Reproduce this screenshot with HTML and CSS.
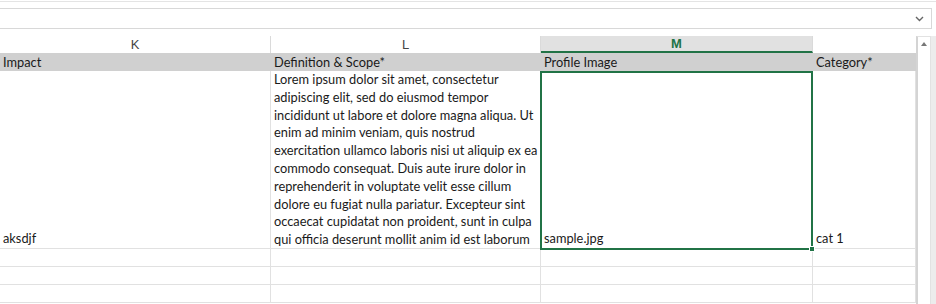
FILE: index.html
```html
<!DOCTYPE html>
<html>
<head lang="en">
    <meta charset="UTF-8">
    <title>Sheet</title>
    <link rel="stylesheet" href="styles.css">
</head>
<body>
<div id="top"></div>
<div id="formula">
    <span class="chev">
        <svg width="9" height="6" viewBox="0 0 9 6"><path d="M1 1 L4.5 4.5 L8 1" fill="none" stroke="#666" stroke-width="1.4"/></svg>
    </span>
</div>
<div id="sheet">
    <div id="grid">
        <div class="colhead">K</div>
        <div class="colhead">L</div>
        <div class="colhead sel">M</div>
        <div class="colhead blank"></div>

        <div class="cell head">Impact</div>
        <div class="cell head">Definition &amp; Scope*</div>
        <div class="cell head">Profile Image</div>
        <div class="cell head">Category*</div>

        <div class="cell tall">aksdjf</div>
        <div class="cell tall wrap">Lorem ipsum dolor sit amet, consectetur<br>adipiscing elit, sed do eiusmod tempor<br>incididunt ut labore et dolore magna aliqua. Ut<br>enim ad minim veniam, quis nostrud<br>exercitation ullamco laboris nisi ut aliquip ex ea<br>commodo consequat. Duis aute irure dolor in<br>reprehenderit in voluptate velit esse cillum<br>dolore eu fugiat nulla pariatur. Excepteur sint<br>occaecat cupidatat non proident, sunt in culpa<br>qui officia deserunt mollit anim id est laborum</div>
        <div class="cell tall active">sample.jpg<span class="handle"></span></div>
        <div class="cell tall">cat 1</div>

        <div class="cell"></div><div class="cell"></div><div class="cell"></div><div class="cell"></div>
        <div class="cell"></div><div class="cell"></div><div class="cell"></div><div class="cell"></div>
        <div class="cell"></div><div class="cell"></div><div class="cell"></div><div class="cell"></div>
    </div>
    <div id="vscroll">
        <div class="up"></div>
    </div>
    <div id="edge"></div>
</div>
</body>
</html>
```

FILE: styles.css
```css
*{
    margin: 0;
    padding: 0;
    box-sizing: border-box;
}
body{
    width: 936px;
    height: 304px;
    overflow: hidden;
    background: #fff;
    font-family: "Lato", "Liberation Sans", sans-serif;
    color: #1a1a1a;
}
#top{
    height: 7px;
    border-top: 1px solid #e4e4e4;
    margin-top: 1px;
}
#formula{
    width: 932px;
    height: 21px;
    border: 1px solid #d8d8d8;
    border-left: none;
    display: flex;
    align-items: center;
    justify-content: flex-end;
    padding-right: 7px;
}
.chev{
    display: flex;
}
#sheet{
    margin-top: 7px;
    display: flex;
    height: 269px;
}
#grid{
    width: 916px;
    display: grid;
    grid-template-columns: 271px 270px 272px 103px;
    grid-template-rows: 17px 18px 178px 18px 18px 18px;
}
.colhead{
    font-family: "Liberation Sans", sans-serif;
    font-size: 13px;
    color: #444;
    text-align: center;
    line-height: 17px;
    border-right: 1px solid #dadada;
}
.colhead.sel{
    background: #e1e1e1;
    color: #217346;
    font-weight: bold;
    border-bottom: 2px solid #217346;
    line-height: 16px;
}
.colhead.blank{
    border-right: none;
}
.cell{
    border-right: 1px solid #e1e1e1;
    border-bottom: 1px solid #e1e1e1;
    font-size: 12.8px;
    padding-left: 3px;
    white-space: nowrap;
    line-height: 17px;
}
.cell.head{
    background: #d0d0d0;
    border-right: none;
    border-bottom: none;
    line-height: 18px;
}
.cell.tall{
    display: flex;
    align-items: flex-end;
    line-height: 17.8px;
}
.cell.wrap{
    display: block;
}
.cell.active{
    position: relative;
    border: 2px solid #217346;
    margin-left: -1px;
    padding-left: 2px;
    margin-bottom: -1px;
}
.handle{
    position: absolute;
    right: -4px;
    bottom: -4px;
    width: 6px;
    height: 6px;
    background: #217346;
    border: 1px solid #fff;
}
#vscroll{
    width: 15px;
    border-left: 2px solid #d4d4d4;
    border-right: 1px solid #e2e2e2;
    border-top: 1px solid #e2e2e2;
    background: #fff;
    display: flex;
    justify-content: center;
    padding-top: 5px;
}
.up{
    width: 0;
    height: 0;
    border-left: 3.5px solid transparent;
    border-right: 3.5px solid transparent;
    border-bottom: 4px solid #777;
}
#edge{
    flex: 1;
    background: #ececec;
}
```
